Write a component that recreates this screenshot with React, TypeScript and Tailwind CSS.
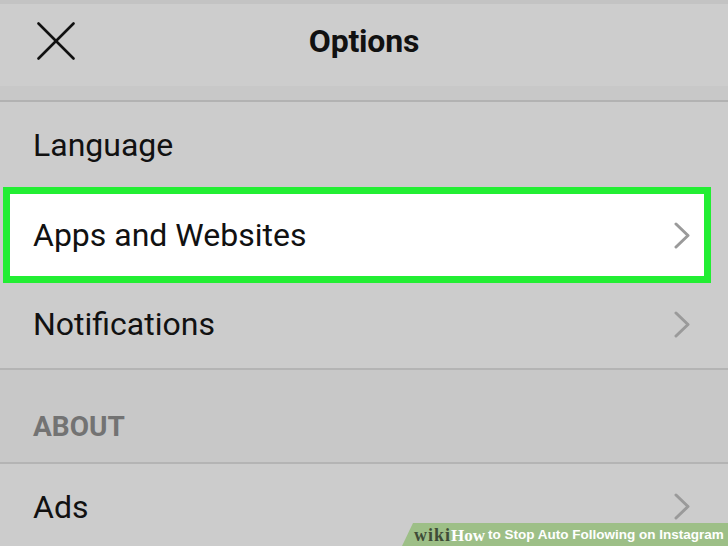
import React from "react";

function Chevron() {
  return (
    <svg width="17" height="27" viewBox="0 0 17 27" fill="none">
      <polyline points="2,2 14,13.5 2,25" stroke="#9a9a9a" strokeWidth="3" strokeLinecap="round" strokeLinejoin="round" />
    </svg>
  );
}

function CloseIcon() {
  return (
    <svg width="38" height="38" viewBox="0 0 38 38" fill="none">
      <line x1="1.5" y1="1.5" x2="36.5" y2="36.5" stroke="#111" strokeWidth="2.6" strokeLinecap="round" />
      <line x1="36.5" y1="1.5" x2="1.5" y2="36.5" stroke="#111" strokeWidth="2.6" strokeLinecap="round" />
    </svg>
  );
}

export default function App() {
  return (
    <div className="relative w-[728px] h-[546px] overflow-hidden bg-[#cccccc] font-['Roboto',sans-serif] text-[#111]">
      <div className="h-[4px] bg-[#c3c3c3]" />
      <header className="h-[82px] bg-[#cdcdcd] grid grid-cols-[1fr_auto_1fr] items-center pb-[9px]">
        <div className="pl-[37px] flex items-center">
          <CloseIcon />
        </div>
        <h1 className="text-[32px] leading-none font-bold tracking-[-0.2px]">Options</h1>
        <div />
      </header>
      <div className="h-[14px] bg-[#c8c8c8]" />
      <div className="h-[2px] bg-[#b2b2b2]" />

      <div className="h-[85px] flex items-center pl-[33px] text-[32px] leading-none">Language</div>

      <div className="ml-[3px] w-[708px] h-[96px] border-[7px] border-[#22ee33] bg-white flex items-center justify-between pl-[23px] pr-[13px] text-[32px] leading-none">
        <span>Apps and Websites</span>
        <Chevron />
      </div>

      <div className="h-[85px] flex items-center justify-between pl-[33px] pr-[37px] pb-[3px] text-[32px] leading-none">
        <span>Notifications</span>
        <Chevron />
      </div>

      <div className="h-[2px] bg-[#b4b4b4]" />
      <div className="h-[92px] bg-[#c8c8c8] flex items-center pl-[33px] pt-[22px] text-[28px] leading-none font-bold text-[#737373]">
        ABOUT
      </div>
      <div className="h-[2px] bg-[#b4b4b4]" />

      <div className="h-[85px] flex items-center justify-between pl-[33px] pr-[37px] text-[32px] leading-none">
        <span>Ads</span>
        <Chevron />
      </div>

      <div className="absolute right-0 bottom-0 h-[23px] w-[326px] bg-[#9dbf87] [clip-path:polygon(11px_0,100%_0,100%_100%,0_100%)] flex items-center pl-[12px] pt-[1px] whitespace-nowrap">
        <span className="font-['Liberation_Serif',serif] font-bold text-[18px] tracking-[1px] text-[#3f4c37] leading-none">wiki</span>
        <span className="font-['Liberation_Serif',serif] font-bold text-[17px] text-white leading-none">How</span>
        <span className="font-['Liberation_Sans',sans-serif] font-bold text-[13.5px] text-white leading-none ml-[3px]">to Stop Auto Following on Instagram</span>
      </div>
    </div>
  );
}
